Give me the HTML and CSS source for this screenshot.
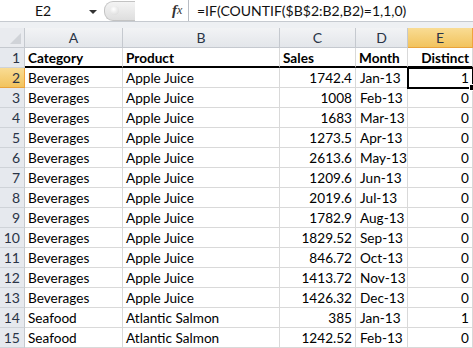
FILE: index.html
```html
<!DOCTYPE html>
<html>
<head>
<meta charset="utf-8">
<link rel="stylesheet" href="styles.css">
</head>
<body>
<div class="formula-bar">
  <div class="namebox"><span class="name">E2</span><span class="arrow"></span></div>
  <div class="splitter"><div class="oval"><div class="dot"></div></div></div>
  <div class="fx"><span class="f">f</span><span class="x">x</span></div>
  <div class="formula">=IF(COUNTIF($B$2:B2,B2)=1,1,0)</div>
</div>
<div class="band"></div>
<div class="sheet">
  <div class="hd corner"><span class="tri"></span></div>
  <div class="hd col">A</div><div class="hd col">B</div><div class="hd col">C</div><div class="hd col">D</div><div class="hd col sel">E</div>

  <div class="hd row">1</div>
  <div class="c b top">Category</div><div class="c b top">Product</div><div class="c b top">Sales</div><div class="c b top">Month</div><div class="c b top r">Distinct</div>

  <div class="hd row sel">2</div>
  <div class="c">Beverages</div><div class="c">Apple Juice</div><div class="c r">1742.4</div><div class="c m">Jan-13</div><div class="c r active">1</div>
  <div class="hd row">3</div>
  <div class="c">Beverages</div><div class="c">Apple Juice</div><div class="c r">1008</div><div class="c m">Feb-13</div><div class="c r">0</div>
  <div class="hd row">4</div>
  <div class="c">Beverages</div><div class="c">Apple Juice</div><div class="c r">1683</div><div class="c m">Mar-13</div><div class="c r">0</div>
  <div class="hd row">5</div>
  <div class="c">Beverages</div><div class="c">Apple Juice</div><div class="c r">1273.5</div><div class="c m">Apr-13</div><div class="c r">0</div>
  <div class="hd row">6</div>
  <div class="c">Beverages</div><div class="c">Apple Juice</div><div class="c r">2613.6</div><div class="c m">May-13</div><div class="c r">0</div>
  <div class="hd row">7</div>
  <div class="c">Beverages</div><div class="c">Apple Juice</div><div class="c r">1209.6</div><div class="c m">Jun-13</div><div class="c r">0</div>
  <div class="hd row">8</div>
  <div class="c">Beverages</div><div class="c">Apple Juice</div><div class="c r">2019.6</div><div class="c m">Jul-13</div><div class="c r">0</div>
  <div class="hd row">9</div>
  <div class="c">Beverages</div><div class="c">Apple Juice</div><div class="c r">1782.9</div><div class="c m">Aug-13</div><div class="c r">0</div>
  <div class="hd row">10</div>
  <div class="c">Beverages</div><div class="c">Apple Juice</div><div class="c r">1829.52</div><div class="c m">Sep-13</div><div class="c r">0</div>
  <div class="hd row">11</div>
  <div class="c">Beverages</div><div class="c">Apple Juice</div><div class="c r">846.72</div><div class="c m">Oct-13</div><div class="c r">0</div>
  <div class="hd row">12</div>
  <div class="c">Beverages</div><div class="c">Apple Juice</div><div class="c r">1413.72</div><div class="c m">Nov-13</div><div class="c r">0</div>
  <div class="hd row">13</div>
  <div class="c">Beverages</div><div class="c">Apple Juice</div><div class="c r">1426.32</div><div class="c m">Dec-13</div><div class="c r">0</div>
  <div class="hd row">14</div>
  <div class="c">Seafood</div><div class="c">Atlantic Salmon</div><div class="c r">385</div><div class="c m">Jan-13</div><div class="c r">1</div>
  <div class="hd row">15</div>
  <div class="c">Seafood</div><div class="c">Atlantic Salmon</div><div class="c r">1242.52</div><div class="c m">Feb-13</div><div class="c r">0</div>
</div>
</body>
</html>
```

FILE: styles.css
```css
html, body {
  margin: 0;
  padding: 0;
  background: #ffffff;
  overflow: hidden;
}
body {
  font-family: Lato, "Liberation Sans", sans-serif;
  font-size: 14px;
  color: #000;
  width: 473px;
  height: 348px;
}
.formula-bar {
  display: flex;
  height: 22px;
  background: #ffffff;
  border-bottom: 1px solid #c6cad0;
  box-sizing: border-box;
}
.namebox {
  width: 100px;
  display: flex;
  align-items: center;
  position: relative;
}
.name {
  width: 86px;
  text-align: center;
  font-size: 14px;
  color: #111;
}
.arrow {
  width: 0;
  height: 0;
  border-left: 4px solid transparent;
  border-right: 4px solid transparent;
  border-top: 4px solid #333;
  margin-left: 3px;
  margin-top: 2px;
}
.splitter {
  width: 60px;
  display: flex;
  align-items: center;
  padding-left: 4px;
}
.oval {
  width: 30px;
  height: 18px;
  border-radius: 9px 0 0 9px;
  background: linear-gradient(#f4f4f4, #dedede);
  border: 1px solid #c3c3c3;
  border-right: none;
  position: relative;
}
.dot {
  position: absolute;
  left: 5px;
  top: 4px;
  width: 9px;
  height: 9px;
  border-radius: 50%;
  background: radial-gradient(circle at 40% 35%, #ffffff, #d4d4d4);
}
.fx {
  width: 24px;
  font-family: "Liberation Serif", serif;
  font-style: italic;
  font-size: 15px;
  color: #333;
  display: flex;
  align-items: center;
  padding-left: 8px;
  box-sizing: border-box;
}
.fx .f { font-weight: bold; }
.fx .x { font-size: 12px; margin-left: 0; }
.formula {
  flex: 1;
  border-left: 1px solid #b9bdc4;
  padding-left: 8px;
  display: flex;
  align-items: center;
  font-size: 14px;
  color: #111;
}
.band {
  height: 6px;
  background: #eef0f3;
}
.sheet {
  display: grid;
  grid-template-columns: 25px 98px 157px 76px 52px 65px;
  grid-auto-rows: 20px;
}
.hd {
  background: linear-gradient(#f2f3f5, #e3e6ea);
  border-right: 1px solid #c5c9cf;
  border-bottom: 1px solid #c5c9cf;
  box-sizing: border-box;
  color: #2a3446;
  font-size: 14px;
  display: flex;
  align-items: center;
  justify-content: center;
}
.hd.row {
  background: #e6e9ee;
  justify-content: flex-end;
  padding-right: 4px;
  border-bottom-color: #cfd3d8;
}
.hd.sel {
  background: linear-gradient(#f9dc94, #f2c35d);
  border-right-color: #f0a33e;
  border-bottom-color: #e9a33c;
}
.corner {
  position: relative;
  background: #e9ebef;
}
.tri {
  position: absolute;
  right: 3px;
  bottom: 3px;
  width: 0;
  height: 0;
  border-left: 11px solid transparent;
  border-bottom: 11px solid #d0d3d8;
}
.c {
  border-right: 1px solid #d9d9d9;
  border-bottom: 1px solid #d9d9d9;
  box-sizing: border-box;
  padding: 0 3px;
  display: flex;
  align-items: center;
  white-space: nowrap;
  overflow: visible;
  font-size: 13.6px;
  padding-top: 1px;
}
.c.b { font-weight: bold; }
.c.top { border-bottom: 2px solid #000; }
.c.r { justify-content: flex-end; }
.c.m { padding-left: 4px; }
.active {
  position: relative;
  outline: 2px solid #000;
  outline-offset: -1px;
}
.active::after {
  content: "";
  position: absolute;
  right: -4px;
  bottom: -4px;
  width: 5px;
  height: 5px;
  background: #000;
  border: 1px solid #fff;
}
```
